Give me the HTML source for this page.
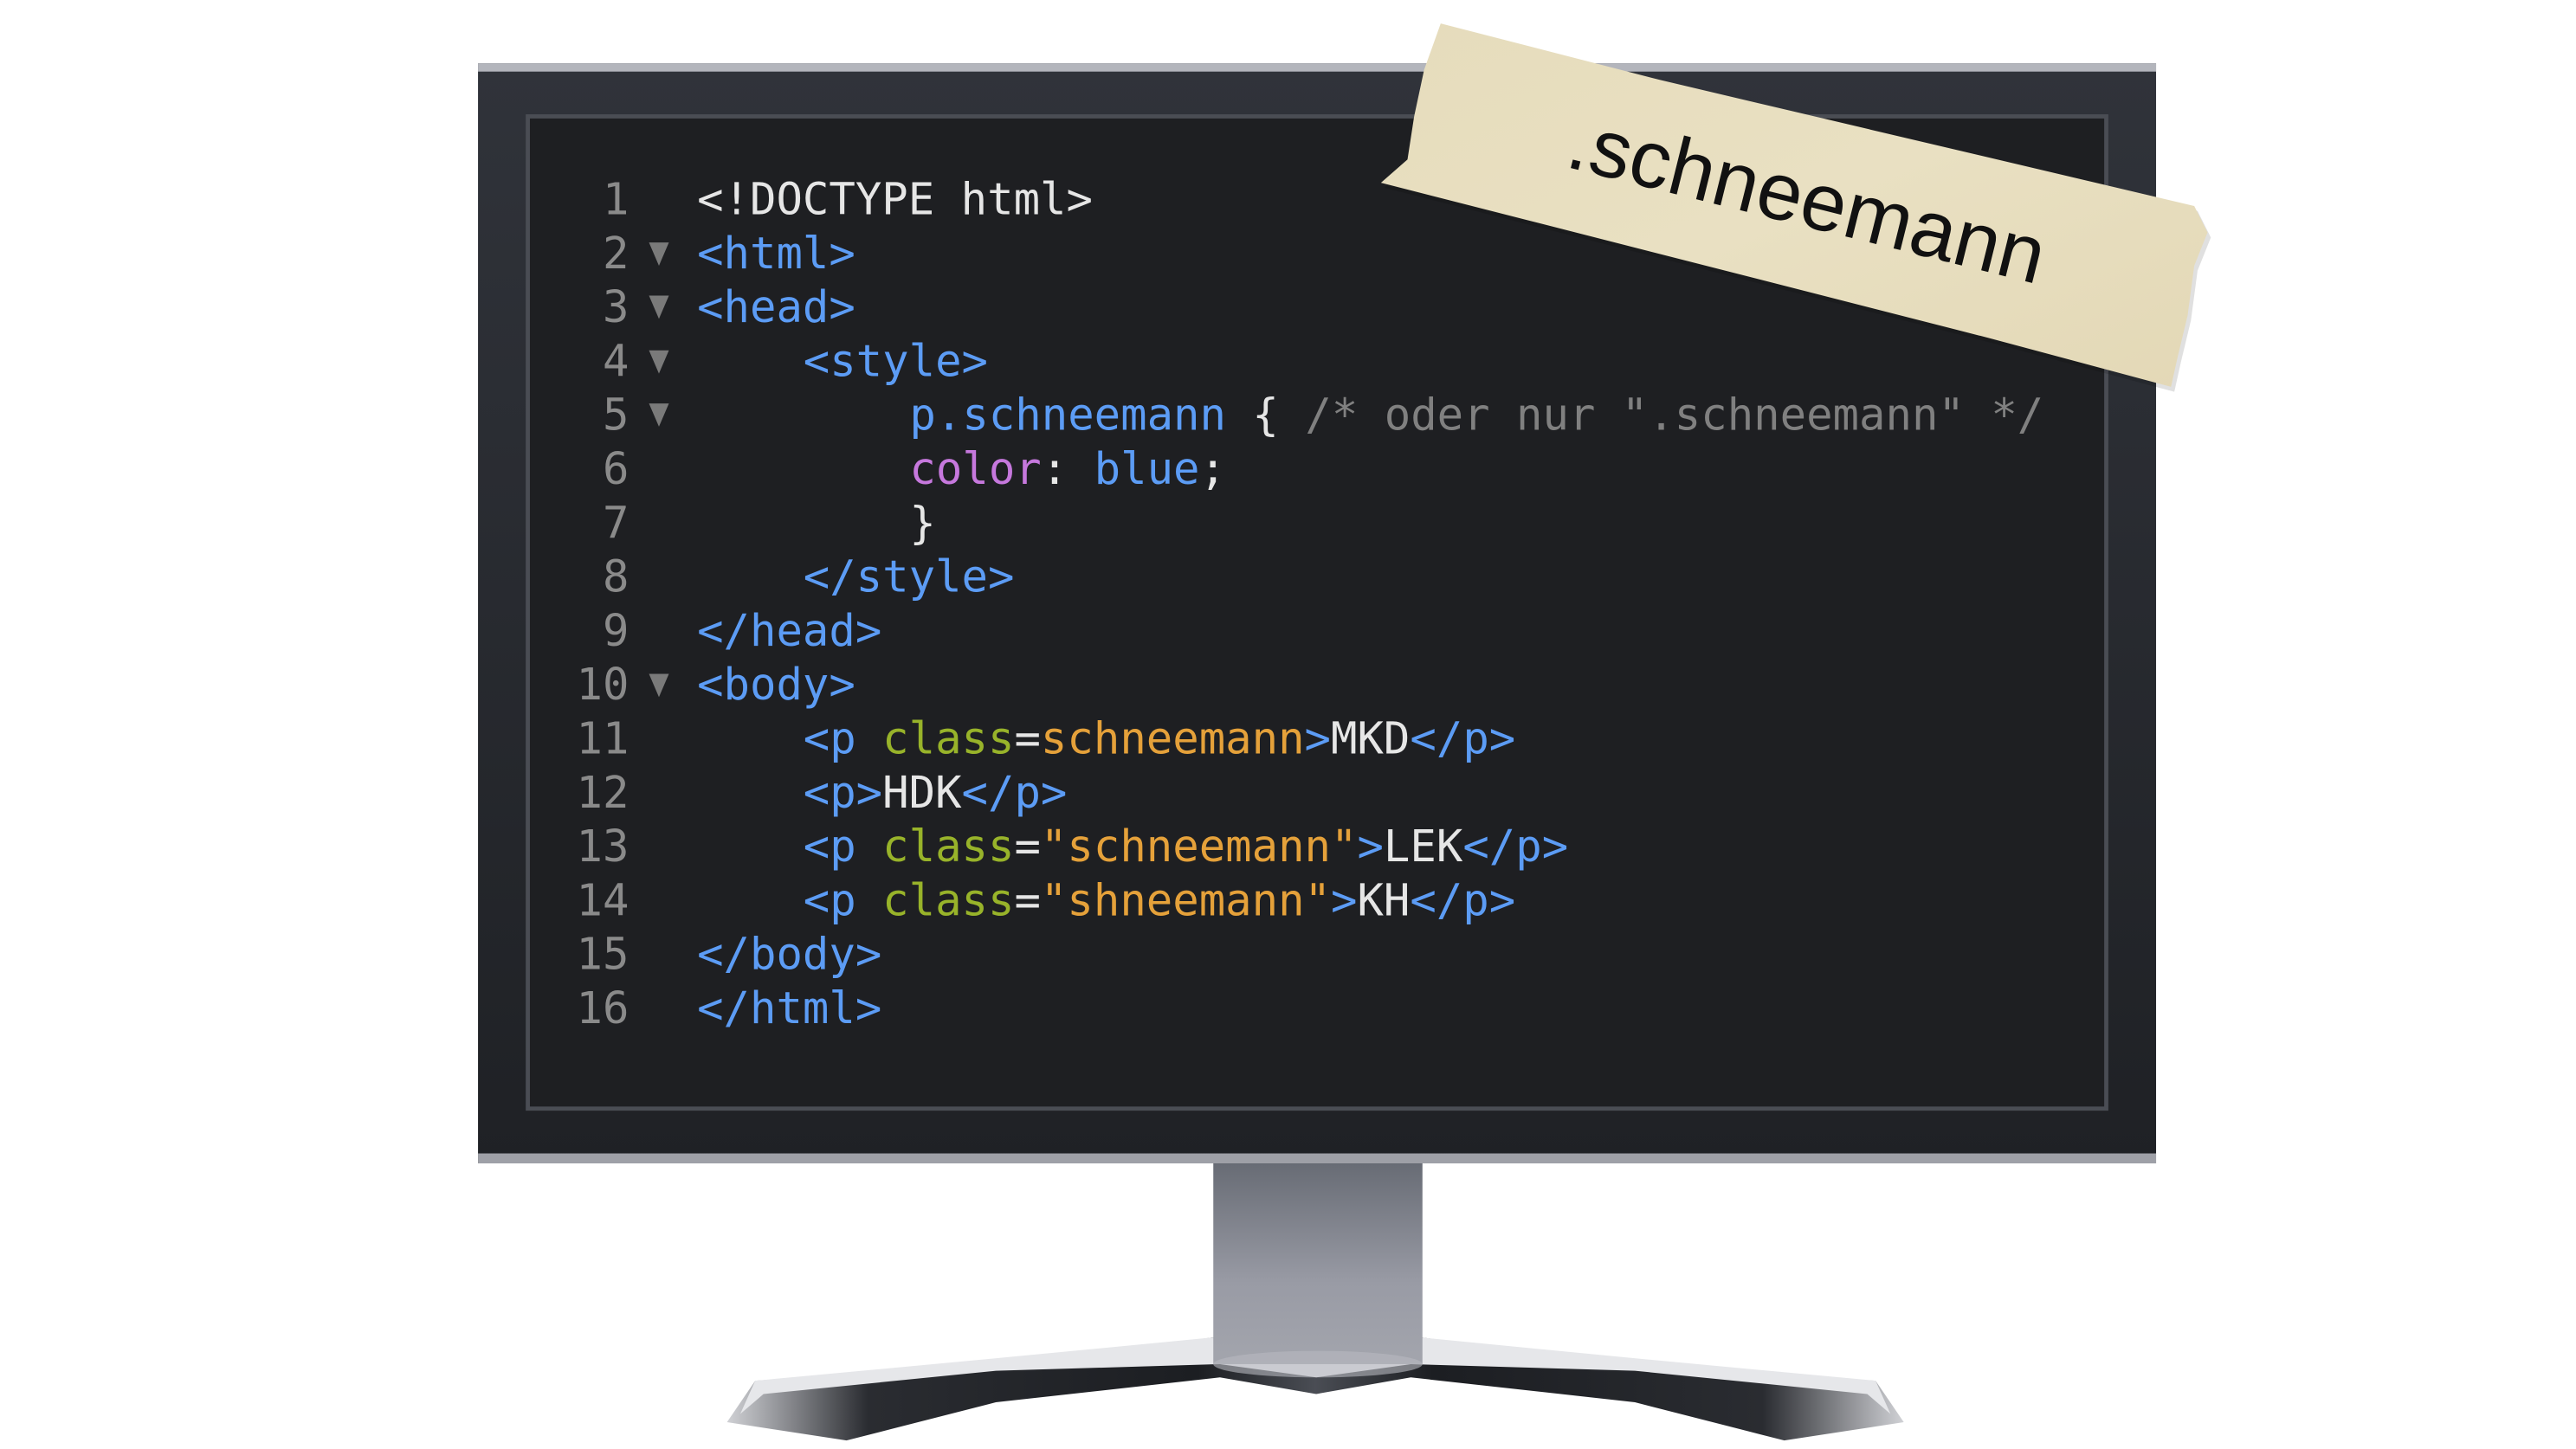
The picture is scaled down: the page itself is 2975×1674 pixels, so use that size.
<!DOCTYPE html>
<html><head><meta charset="utf-8"><style>
html,body{margin:0;padding:0;background:#fff;width:2975px;height:1674px;overflow:hidden}
svg{display:block}
.c{font-family:"DejaVu Sans Mono","Liberation Mono",monospace;font-size:26.4px;white-space:pre}
</style></head><body>
<svg width="2975" height="1674" viewBox="0 0 1552 873" xmlns="http://www.w3.org/2000/svg">
<defs>
<linearGradient id="bz" x1="0" y1="0" x2="0" y2="1"><stop offset="0" stop-color="#30333a"/><stop offset="1" stop-color="#1f2125"/></linearGradient>
<linearGradient id="neck" x1="0" y1="0" x2="0" y2="1"><stop offset="0" stop-color="#676b74"/><stop offset="0.6" stop-color="#999ba5"/><stop offset="1" stop-color="#a3a5ad"/></linearGradient>
<linearGradient id="base" x1="0" y1="0" x2="1" y2="0"><stop offset="0" stop-color="#d0d1d5"/><stop offset="0.12" stop-color="#2a2c31"/><stop offset="0.4" stop-color="#1c1e22"/><stop offset="0.5" stop-color="#4a4d54"/><stop offset="0.6" stop-color="#1c1e22"/><stop offset="0.88" stop-color="#2a2c31"/><stop offset="1" stop-color="#d0d1d5"/></linearGradient>
<linearGradient id="tape" x1="0" y1="0" x2="1" y2="1"><stop offset="0" stop-color="#e6dcbc"/><stop offset="0.5" stop-color="#e9e0c2"/><stop offset="1" stop-color="#e3d8b6"/></linearGradient>
</defs>
<!-- stand -->
<polygon points="730,806 600,822 455,832 438,857 510,868 600,845 735,830 793,840 850,830 985,845 1075,868 1147,857 1130,832 985,822 857,806" fill="url(#base)"/>
<polygon points="730,806 605,818 455,832 446,852 460,840 600,826 735,822 793,830 850,822 985,826 1125,840 1139,852 1130,832 980,818 857,806" fill="#e6e7ea"/>
<rect x="731" y="700" width="126" height="122" fill="url(#neck)"/>
<ellipse cx="794" cy="822" rx="63" ry="8" fill="#b8b9bf" opacity="0.6"/>
<!-- monitor -->
<rect x="288" y="38" width="1011" height="663" fill="url(#bz)"/>
<rect x="288" y="38" width="1011" height="5" fill="#b3b5bc"/>
<rect x="288" y="695" width="1011" height="6" fill="#9ea0a7"/>
<rect x="318" y="70" width="951" height="598" fill="#1e1f22" stroke="#4a4d54" stroke-width="2.5"/>
<!-- code -->
<g class="c">
<g fill="#8a8a8a" text-anchor="end">
<text x="379" y="129">1</text><text x="379" y="161.5">2</text><text x="379" y="194">3</text><text x="379" y="226.5">4</text><text x="379" y="259">5</text><text x="379" y="291.5">6</text><text x="379" y="324">7</text><text x="379" y="356.5">8</text><text x="379" y="389">9</text><text x="379" y="421.5">10</text><text x="379" y="454">11</text><text x="379" y="486.5">12</text><text x="379" y="519">13</text><text x="379" y="551.5">14</text><text x="379" y="584">15</text><text x="379" y="616.5">16</text>
</g>
<g fill="#7a7a7a"><polygon points="391,146 403,146 397,160"/><polygon points="391,178 403,178 397,192"/><polygon points="391,211 403,211 397,225"/><polygon points="391,243 403,243 397,257"/><polygon points="391,406 403,406 397,420"/></g>
<text x="420" y="129" fill="#e6e6e6">&lt;!DOCTYPE html&gt;</text>
<text x="420" y="161.5" fill="#5c9cf5">&lt;html&gt;</text>
<text x="420" y="194" fill="#5c9cf5">&lt;head&gt;</text>
<text x="484" y="226.5" fill="#5c9cf5">&lt;style&gt;</text>
<text x="548" y="259"><tspan fill="#5c9cf5">p.schneemann</tspan><tspan fill="#e6e6e6"> { </tspan><tspan fill="#808080">/* oder nur ".schneemann" */</tspan></text>
<text x="548" y="291.5"><tspan fill="#c678dd">color</tspan><tspan fill="#e6e6e6">: </tspan><tspan fill="#5c9cf5">blue</tspan><tspan fill="#e6e6e6">;</tspan></text>
<text x="548" y="324" fill="#e6e6e6">}</text>
<text x="484" y="356.5" fill="#5c9cf5">&lt;/style&gt;</text>
<text x="420" y="389" fill="#5c9cf5">&lt;/head&gt;</text>
<text x="420" y="421.5" fill="#5c9cf5">&lt;body&gt;</text>
<text x="484" y="454"><tspan fill="#5c9cf5">&lt;p </tspan><tspan fill="#98b32a">class</tspan><tspan fill="#e6e6e6">=</tspan><tspan fill="#e5a13a">schneemann</tspan><tspan fill="#5c9cf5">&gt;</tspan><tspan fill="#e6e6e6">MKD</tspan><tspan fill="#5c9cf5">&lt;/p&gt;</tspan></text>
<text x="484" y="486.5"><tspan fill="#5c9cf5">&lt;p&gt;</tspan><tspan fill="#e6e6e6">HDK</tspan><tspan fill="#5c9cf5">&lt;/p&gt;</tspan></text>
<text x="484" y="519"><tspan fill="#5c9cf5">&lt;p </tspan><tspan fill="#98b32a">class</tspan><tspan fill="#e6e6e6">=</tspan><tspan fill="#e5a13a">"schneemann"</tspan><tspan fill="#5c9cf5">&gt;</tspan><tspan fill="#e6e6e6">LEK</tspan><tspan fill="#5c9cf5">&lt;/p&gt;</tspan></text>
<text x="484" y="551.5"><tspan fill="#5c9cf5">&lt;p </tspan><tspan fill="#98b32a">class</tspan><tspan fill="#e6e6e6">=</tspan><tspan fill="#e5a13a">"shneemann"</tspan><tspan fill="#5c9cf5">&gt;</tspan><tspan fill="#e6e6e6">KH</tspan><tspan fill="#5c9cf5">&lt;/p&gt;</tspan></text>
<text x="420" y="584" fill="#5c9cf5">&lt;/body&gt;</text>
<text x="420" y="616.5" fill="#5c9cf5">&lt;/html&gt;</text>
</g>
<!-- tape -->
<polygon points="868,14 1000,48 1322,124 1330,140 1322,160 1318,190 1312,215 1308,233 1200,204 832,110 848,96 852,70 858,42" fill="#000" opacity="0.12" transform="translate(2,3)"/>
<polygon points="868,14 1000,48 1322,124 1330,140 1322,160 1318,190 1312,215 1308,233 1200,204 832,110 848,96 852,70 858,42" fill="url(#tape)"/>
<text x="942" y="100" transform="rotate(14 942 100)" font-family="Liberation Sans, Arial, sans-serif" font-size="49" fill="#111">.schneemann</text>
</svg>
</body></html>
